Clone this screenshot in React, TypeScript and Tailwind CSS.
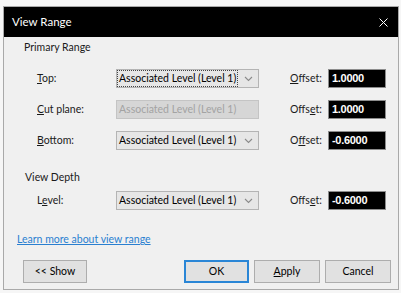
import React from "react";

const font = { fontFamily: "Lato, 'Noto Sans', sans-serif" };

function Dropdown({ disabled = false, focused = false }: { disabled?: boolean; focused?: boolean }) {
  if (disabled) {
    return (
      <div className="w-[143px] h-[19px] flex items-center border border-[#c4c4c4] bg-[#d6d6d6] text-[#a3a3a3] pl-[1px] whitespace-nowrap">
        <span className="px-[1px]">Associated Level (Level 1)</span>
      </div>
    );
  }
  return (
    <div className="w-[143px] h-[19px] flex items-center justify-between border border-[#b4b4b4] bg-[#e6e6e6] text-black pl-[1px] pr-[5px] whitespace-nowrap">
      <span className={`px-[1px] leading-[15px] ${focused ? "outline outline-1 outline-dotted outline-[#444]" : ""}`}>
        Associated Level (Level 1)
      </span>
      <svg width="9" height="6" viewBox="0 0 9 6">
        <path d="M1 1 L4.5 4.5 L8 1" fill="none" stroke="#8a8a8a" strokeWidth="1.1" />
      </svg>
    </div>
  );
}

function OffsetBox({ value }: { value: string }) {
  return (
    <div className="w-[58px] h-[19px] flex items-center bg-black border border-[#8c8c8c] pl-[3px] text-white text-[11px] font-bold tracking-[-0.3px]" style={{ fontFamily: "'Liberation Sans', sans-serif" }}>
      {value}
    </div>
  );
}

function Row({ label, offset, value, disabled, focused, labelPad = "pl-[33px]" }: {
  label: React.ReactNode;
  offset: React.ReactNode;
  value: string;
  disabled?: boolean;
  focused?: boolean;
  labelPad?: string;
}) {
  return (
    <div className={`flex items-center h-[19px] ${labelPad}`}>
      <div className="w-[79px]">{label}</div>
      <Dropdown disabled={disabled} focused={focused} />
      <div className="w-[31px]" />
      <div className="w-[38px]">{offset}</div>
      <OffsetBox value={value} />
    </div>
  );
}

export default function App() {
  return (
    <div className="w-[401px] h-[293px] bg-[#f6f6f6] pt-[6px] pl-[3px] pr-[2px] pb-[3px] text-[10.5px] text-[#1a1a1a]" style={font}>
      <div className="h-full border border-[#a9a9a9] bg-[#f0f0f0] flex flex-col">
        {/* Title bar */}
        <div className="h-[30px] bg-black flex items-center justify-between pl-[8px] pr-[10px] text-white text-[11.5px]">
          <span>View Range</span>
          <svg width="9" height="9" viewBox="0 0 9 9">
            <path d="M0.5 0.5 L8.5 8.5 M8.5 0.5 L0.5 8.5" stroke="#ffffff" strokeWidth="1" />
          </svg>
        </div>

        <div className="pl-[20px] mt-[2px] leading-[16px]">Primary Range</div>

        <div className="mt-[14px] flex flex-col gap-[12px]">
          <Row
            label={<span><span className="underline">T</span>op:</span>}
            offset={<span><span className="underline">O</span>ffset:</span>}
            value="1.0000"
            focused
          />
          <Row
            label={<span><span className="underline">C</span>ut plane:</span>}
            offset={<span>Offs<span className="underline">e</span>t:</span>}
            value="1.0000"
            disabled
          />
          <Row
            label={<span><span className="underline">B</span>ottom:</span>}
            offset={<span>O<span className="underline">f</span>fset:</span>}
            value="-0.6000"
          />
        </div>

        <div className="pl-[21px] mt-[19px] leading-[16px]">View Depth</div>

        <div className="mt-[6px]">
          <Row
            label={<span>L<span className="underline">e</span>vel:</span>}
            offset={<span>Offs<span className="underline">e</span>t:</span>}
            value="-0.6000"
            labelPad="pl-[34px] -ml-[1px]"
          />
        </div>

        <div className="pl-[13px] mt-[21px] leading-[16px]">
          <span className="text-[#2a7fd0] underline">Learn more about view range</span>
        </div>

        <div className="mt-[13px] flex items-center pl-[19px] pr-[7px]">
          <button className="w-[64px] h-[23px] bg-[#e1e1e1] border border-[#adadad] text-black">&lt;&lt; Show</button>
          <div className="flex-1" />
          <div className="flex gap-[5px]">
            <button className="w-[65px] h-[23px] bg-[#e1e1e1] border-2 border-[#2a86d6] text-black">OK</button>
            <button className="w-[66px] h-[23px] bg-[#e1e1e1] border border-[#adadad] text-black"><span className="underline">A</span>pply</button>
            <button className="w-[66px] h-[23px] bg-[#e1e1e1] border border-[#adadad] text-black">Cancel</button>
          </div>
        </div>
      </div>
    </div>
  );
}
